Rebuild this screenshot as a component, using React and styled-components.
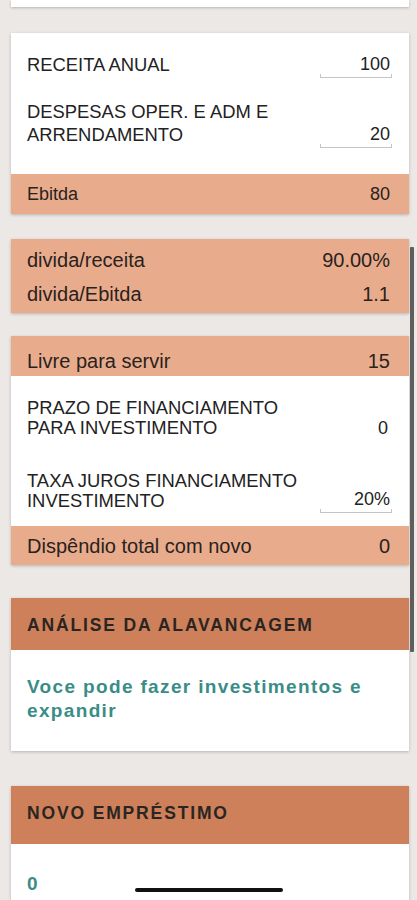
import React from "react";
import styled, { createGlobalStyle } from "styled-components";

const GlobalStyle = createGlobalStyle`
  html, body {
    margin: 0;
    padding: 0;
    background: #ebe8e6;
  }
  body {
    font-family: "Liberation Sans", Arial, sans-serif;
    color: #222;
  }
`;

const Screen = styled.div`
  position: relative;
  width: 417px;
  height: 900px;
  overflow: hidden;
  background: #ebe8e6;
`;

const Page = styled.div`
  display: flex;
  flex-direction: column;
  gap: 25px;
  padding: 0 8px 0 11px;
`;

const Card = styled.div`
  background: #fff;
  box-shadow: 0 1px 3px rgba(0, 0, 0, 0.22);
  margin-top: ${(p) => p.$offset || 0}px;
`;

const CardStub = styled(Card)`
  height: 7px;
`;

const WhiteSection = styled.div`
  display: flex;
  flex-direction: column;
  padding: ${(p) => p.$pad};
`;

const Band = styled.div`
  display: flex;
  flex-direction: column;
  gap: 12px;
  background: #e8ac8d;
  padding: ${(p) => p.$pad};
`;

const BandRow = styled.div`
  display: flex;
  justify-content: space-between;
  align-items: center;
  padding: 0 19px 0 16px;
  font-size: ${(p) => p.$size || 20}px;
  line-height: 22px;
  color: #2a221d;
`;

const Row = styled.div`
  display: flex;
  justify-content: space-between;
  align-items: flex-end;
  padding: ${(p) => p.$pad};
`;

const Label = styled.div`
  font-size: 18.4px;
  line-height: ${(p) => p.$lh || 23}px;
  letter-spacing: ${(p) => p.$ls || 0}px;
  text-transform: uppercase;
  color: #222;
  max-width: 275px;
`;

const Value = styled.div`
  font-size: 18px;
  line-height: ${(p) => p.$lh || 23}px;
  padding-right: 2px;
  color: #222;
`;

const InputBox = styled.div`
  position: relative;
  width: 72px;
  text-align: right;
  font-size: 18px;
  line-height: 22px;
  padding: 0 2px 2px 0;
  box-sizing: border-box;
  margin-bottom: -2px;
  border-bottom: 1px solid #c4c4c4;
  color: #222;

  &::before,
  &::after {
    content: "";
    position: absolute;
    bottom: -1px;
    width: 1px;
    height: 4px;
    background: #c4c4c4;
  }
  &::before {
    left: 0;
  }
  &::after {
    right: 0;
  }
`;

const Header = styled.div`
  background: #cd8059;
  padding: 16px 16px ${(p) => p.$pb || 14}px;
  font-size: 17.5px;
  line-height: 22px;
  font-weight: bold;
  letter-spacing: 1.85px;
  color: #2a2522;
`;

const Message = styled.div`
  padding: ${(p) => p.$pad};
  font-size: 19px;
  line-height: 24px;
  font-weight: bold;
  letter-spacing: 1.35px;
  color: #3a8d86;
`;

const ScrollThumb = styled.div`
  position: absolute;
  right: 3px;
  top: 247px;
  width: 4px;
  height: 405px;
  background: #5e5e5e;
  border-radius: 1px;
`;

const HomeBar = styled.div`
  position: absolute;
  left: 135px;
  top: 888px;
  width: 148px;
  height: 4px;
  border-radius: 2px;
  background: #111;
`;

const App = () => {
  return (
    <Screen>
      <GlobalStyle />
      <Page>
        <CardStub />

        <Card $offset={1}>
          <WhiteSection $pad="8px 0 16px">
            <Row $pad="12px 17px 12px 16px">
              <Label>Receita anual</Label>
              <InputBox>100</InputBox>
            </Row>
            <Row $pad="12px 17px 12px 16px">
              <Label>Despesas oper. e adm e arrendamento</Label>
              <InputBox>20</InputBox>
            </Row>
          </WhiteSection>
          <Band $pad="9px 0">
            <BandRow $size={18}>
              <span>Ebitda</span>
              <span>80</span>
            </BandRow>
          </Band>
        </Card>

        <Card>
          <Band $pad="10px 0 8px">
            <BandRow>
              <span>divida/receita</span>
              <span>90.00%</span>
            </BandRow>
            <BandRow>
              <span>divida/Ebitda</span>
              <span>1.1</span>
            </BandRow>
          </Band>
        </Card>

        <Card $offset={-2}>
          <Band $pad="14px 0 4px">
            <BandRow>
              <span>Livre para servir</span>
              <span>15</span>
            </BandRow>
          </Band>
          <WhiteSection $pad="22px 0 15px">
            <Row $pad="0 19px 0 16px">
              <Label $lh={20}>Prazo de financiamento para investimento</Label>
              <Value $lh={20}>0</Value>
            </Row>
            <Row $pad="33px 17px 0 16px">
              <Label $lh={20}>Taxa juros financiamento investimento</Label>
              <InputBox>20%</InputBox>
            </Row>
          </WhiteSection>
          <Band $pad="9px 0 8px">
            <BandRow>
              <span>Dispêndio total com novo</span>
              <span>0</span>
            </BandRow>
          </Band>
        </Card>

        <Card $offset={8}>
          <Header>ANÁLISE DA ALAVANCAGEM</Header>
          <Message $pad="25px 16px 28px">
            Voce pode fazer investimentos e expandir
          </Message>
        </Card>

        <Card $offset={10}>
          <Header $pb={20}>NOVO EMPRÉSTIMO</Header>
          <Message $pad="28px 16px 40px">0</Message>
        </Card>
      </Page>
      <ScrollThumb />
      <HomeBar />
    </Screen>
  );
};

export default App;
